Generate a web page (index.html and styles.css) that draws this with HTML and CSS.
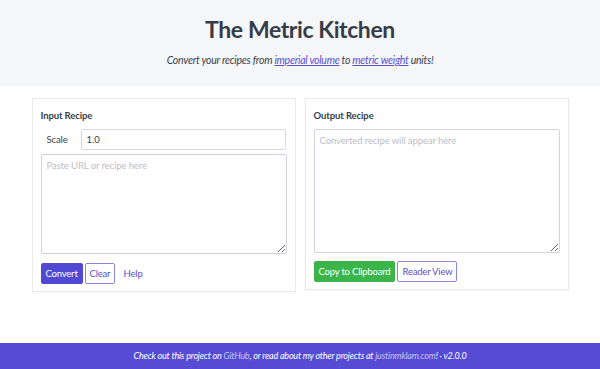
FILE: index.html
```html
<!DOCTYPE html>
<html lang="en">
<head>
    <meta charset="UTF-8">
    <meta name="viewport" content="width=device-width, initial-scale=1.0">
    <title>The Metric Kitchen</title>
    <link rel="stylesheet" href="styles.css">
</head>
<body>
    <header class="hero">
        <h1>The Metric Kitchen</h1>
        <p>Convert your recipes from <a href="#">imperial volume</a> to <a href="#">metric weight</a> units!</p>
    </header>

    <main class="panels">
        <section class="card">
            <h2>Input Recipe</h2>
            <div class="scale-row">
                <label for="scale">Scale</label>
                <input id="scale" class="scale-input" type="text" value="1.0">
            </div>
            <textarea class="recipe-box input-box" placeholder="Paste URL or recipe here"></textarea>
            <div class="actions">
                <button class="btn btn-primary">Convert</button>
                <button class="btn btn-outline">Clear</button>
                <a href="#" class="help-link">Help</a>
            </div>
        </section>

        <section class="card">
            <h2>Output Recipe</h2>
            <textarea class="recipe-box output-box" placeholder="Converted recipe will appear here" readonly></textarea>
            <div class="actions">
                <button class="btn btn-success">Copy to Clipboard</button>
                <button class="btn btn-outline">Reader View</button>
            </div>
        </section>
    </main>

    <footer class="footer">
        Check out this project on <a href="#">GitHub</a>, or read about my other projects at <a href="#">justinmklam.com</a>! &middot; v2.0.0
    </footer>
</body>
</html>
```

FILE: styles.css
```css
body {
    font-family: Lato, "Open Sans", sans-serif;
    color: #363c47;
    margin: 0;
    min-height: 100vh;
    display: flex;
    flex-direction: column;
    background: #fff;
}
.hero {
    background: #f5f6f7;
    text-align: center;
    padding: 12px 0 18px;
}
.hero h1 {
    margin: 0;
    font-size: 23px;
    font-weight: 700;
    letter-spacing: -0.4px;
    line-height: 34px;
    color: #363c47;
}
.hero p {
    margin: 6px 0 0;
    font-size: 10.5px;
    font-style: italic;
    letter-spacing: -0.25px;
    line-height: 16px;
    color: #3a3f4a;
}
.hero a {
    color: #5a4fcf;
}
.panels {
    display: grid;
    grid-template-columns: 264px 264px;
    gap: 9px;
    justify-content: center;
    align-items: start;
    margin-top: 12px;
}
.card {
    border: 1px solid #e9e9ec;
    box-shadow: 0 1px 2px rgba(0, 0, 0, 0.04);
    padding: 9px 8px 7px 8px;
    letter-spacing: -0.1px;
}
.card h2 {
    margin: 0 0 7px;
    font-size: 9.5px;
    font-weight: 700;
    line-height: 13px;
    padding-top: 1px;
}
.scale-row {
    display: flex;
    align-items: center;
    margin-bottom: 4px;
}
.scale-row label {
    font-size: 9.5px;
    width: 40px;
    padding-left: 6px;
    box-sizing: border-box;
}
.scale-input {
    flex: 1;
    height: 21px;
    box-sizing: border-box;
    border: 1px solid #d8d8de;
    border-radius: 2px;
    padding: 0 5px;
    font-family: inherit;
    font-size: 9.5px;
    color: #363c47;
    margin-right: 1px;
}
.recipe-box {
    display: block;
    width: 100%;
    box-sizing: border-box;
    border: 1px solid #d3d2e0;
    border-radius: 2px;
    padding: 4px 5px;
    font-family: inherit;
    font-size: 9.5px;
    letter-spacing: -0.1px;
    line-height: 14px;
    resize: vertical;
    margin: 0;
}
.recipe-box::placeholder {
    color: #bbbec6;
}
.input-box {
    height: 100px;
}
.output-box {
    height: 124px;
}
.actions {
    display: flex;
    align-items: center;
    gap: 2px;
    margin-top: 9px;
}
.output-box + .actions {
    margin-top: 8px;
}
.btn {
    height: 21px;
    box-sizing: border-box;
    border-radius: 2px;
    padding: 0 4px;
    font-family: inherit;
    font-size: 9.5px;
    letter-spacing: -0.2px;
    cursor: pointer;
}
.btn-primary {
    background: #5249d2;
    border: 1px solid #5249d2;
    color: #fff;
}
.btn-success {
    background: #3bb54a;
    border: 1px solid #3bb54a;
    color: #fff;
}
.btn-outline {
    background: #fff;
    border: 1px solid #8b85e0;
    color: #5a4fcf;
}
.help-link {
    color: #5a4fcf;
    text-decoration: none;
    font-size: 9.5px;
    margin-left: 6px;
}
.footer {
    margin-top: auto;
    background: #554cd3;
    color: #fff;
    text-align: center;
    font-style: italic;
    font-size: 9px;
    letter-spacing: -0.2px;
    height: 26px;
    line-height: 26px;
}
.footer a {
    color: #c6c2f2;
    text-decoration: none;
}
```
